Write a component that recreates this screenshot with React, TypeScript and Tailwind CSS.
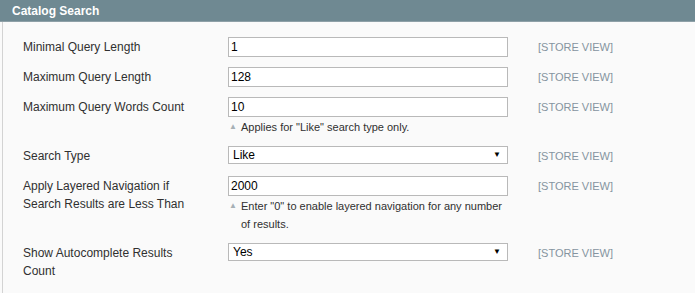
const font = "font-['Liberation_Sans',Arial,sans-serif]";

function Scope() {
  return <div className="pl-[30px] pt-[1px] text-[11px] leading-[18px] text-[#8594a0]">[STORE VIEW]</div>;
}

function Hint({ children }: { children: React.ReactNode }) {
  return (
    <div className="flex pt-[1px] text-[11px] leading-[18px] text-[#303030]">
      <span className="w-[13px] shrink-0 pl-[1px] text-[8px] text-[#a6b0b6]">▲</span>
      <span>{children}</span>
    </div>
  );
}

function TextInput({ value }: { value: string }) {
  return (
    <div className="flex h-[20px] items-center border border-[#b9b9b9] bg-white pl-[2px] text-[12px] text-black">
      {value}
    </div>
  );
}

function Select({ value }: { value: string }) {
  return (
    <div className="flex h-[18px] items-center justify-between border border-[#b9b9b9] bg-white pl-[4px] pr-[6px] text-[12px] text-black">
      <span>{value}</span>
      <span className="text-[8px]">▼</span>
    </div>
  );
}

function Row({
  label,
  children,
  className = "",
}: {
  label: React.ReactNode;
  children: React.ReactNode;
  className?: string;
}) {
  return (
    <div className={`grid grid-cols-[205px_280px_1fr] ${className}`}>
      <div className="w-[178px] pt-[1px] text-[12px] leading-[18px] text-[#303030]">{label}</div>
      <div>{children}</div>
      <Scope />
    </div>
  );
}

export default function App() {
  return (
    <div className={`h-[293px] w-[695px] overflow-hidden bg-[#fafafa] ${font}`}>
      <div className="flex h-[22px] items-center border-b border-[#8ea0a7] bg-[#6f8992] pl-[12px] text-[12px] font-bold text-white">
        Catalog Search
      </div>
      <div className="ml-[2px] h-full border-l border-[#d3d3d3] pl-[20px] pt-[15px]">
        <Row label="Minimal Query Length" className="mb-[10px]">
          <TextInput value="1" />
        </Row>
        <Row label="Maximum Query Length" className="mb-[10px]">
          <TextInput value="128" />
        </Row>
        <Row label="Maximum Query Words Count" className="mb-[10px]">
          <TextInput value="10" />
          <Hint>Applies for "Like" search type only.</Hint>
        </Row>
        <Row label="Search Type" className="mb-[11px]">
          <Select value="Like" />
        </Row>
        <Row label="Apply Layered Navigation if Search Results are Less Than" className="mb-[10px]">
          <TextInput value="2000" />
          <Hint>Enter "0" to enable layered navigation for any number of results.</Hint>
        </Row>
        <Row label="Show Autocomplete Results Count">
          <Select value="Yes" />
        </Row>
      </div>
    </div>
  );
}
